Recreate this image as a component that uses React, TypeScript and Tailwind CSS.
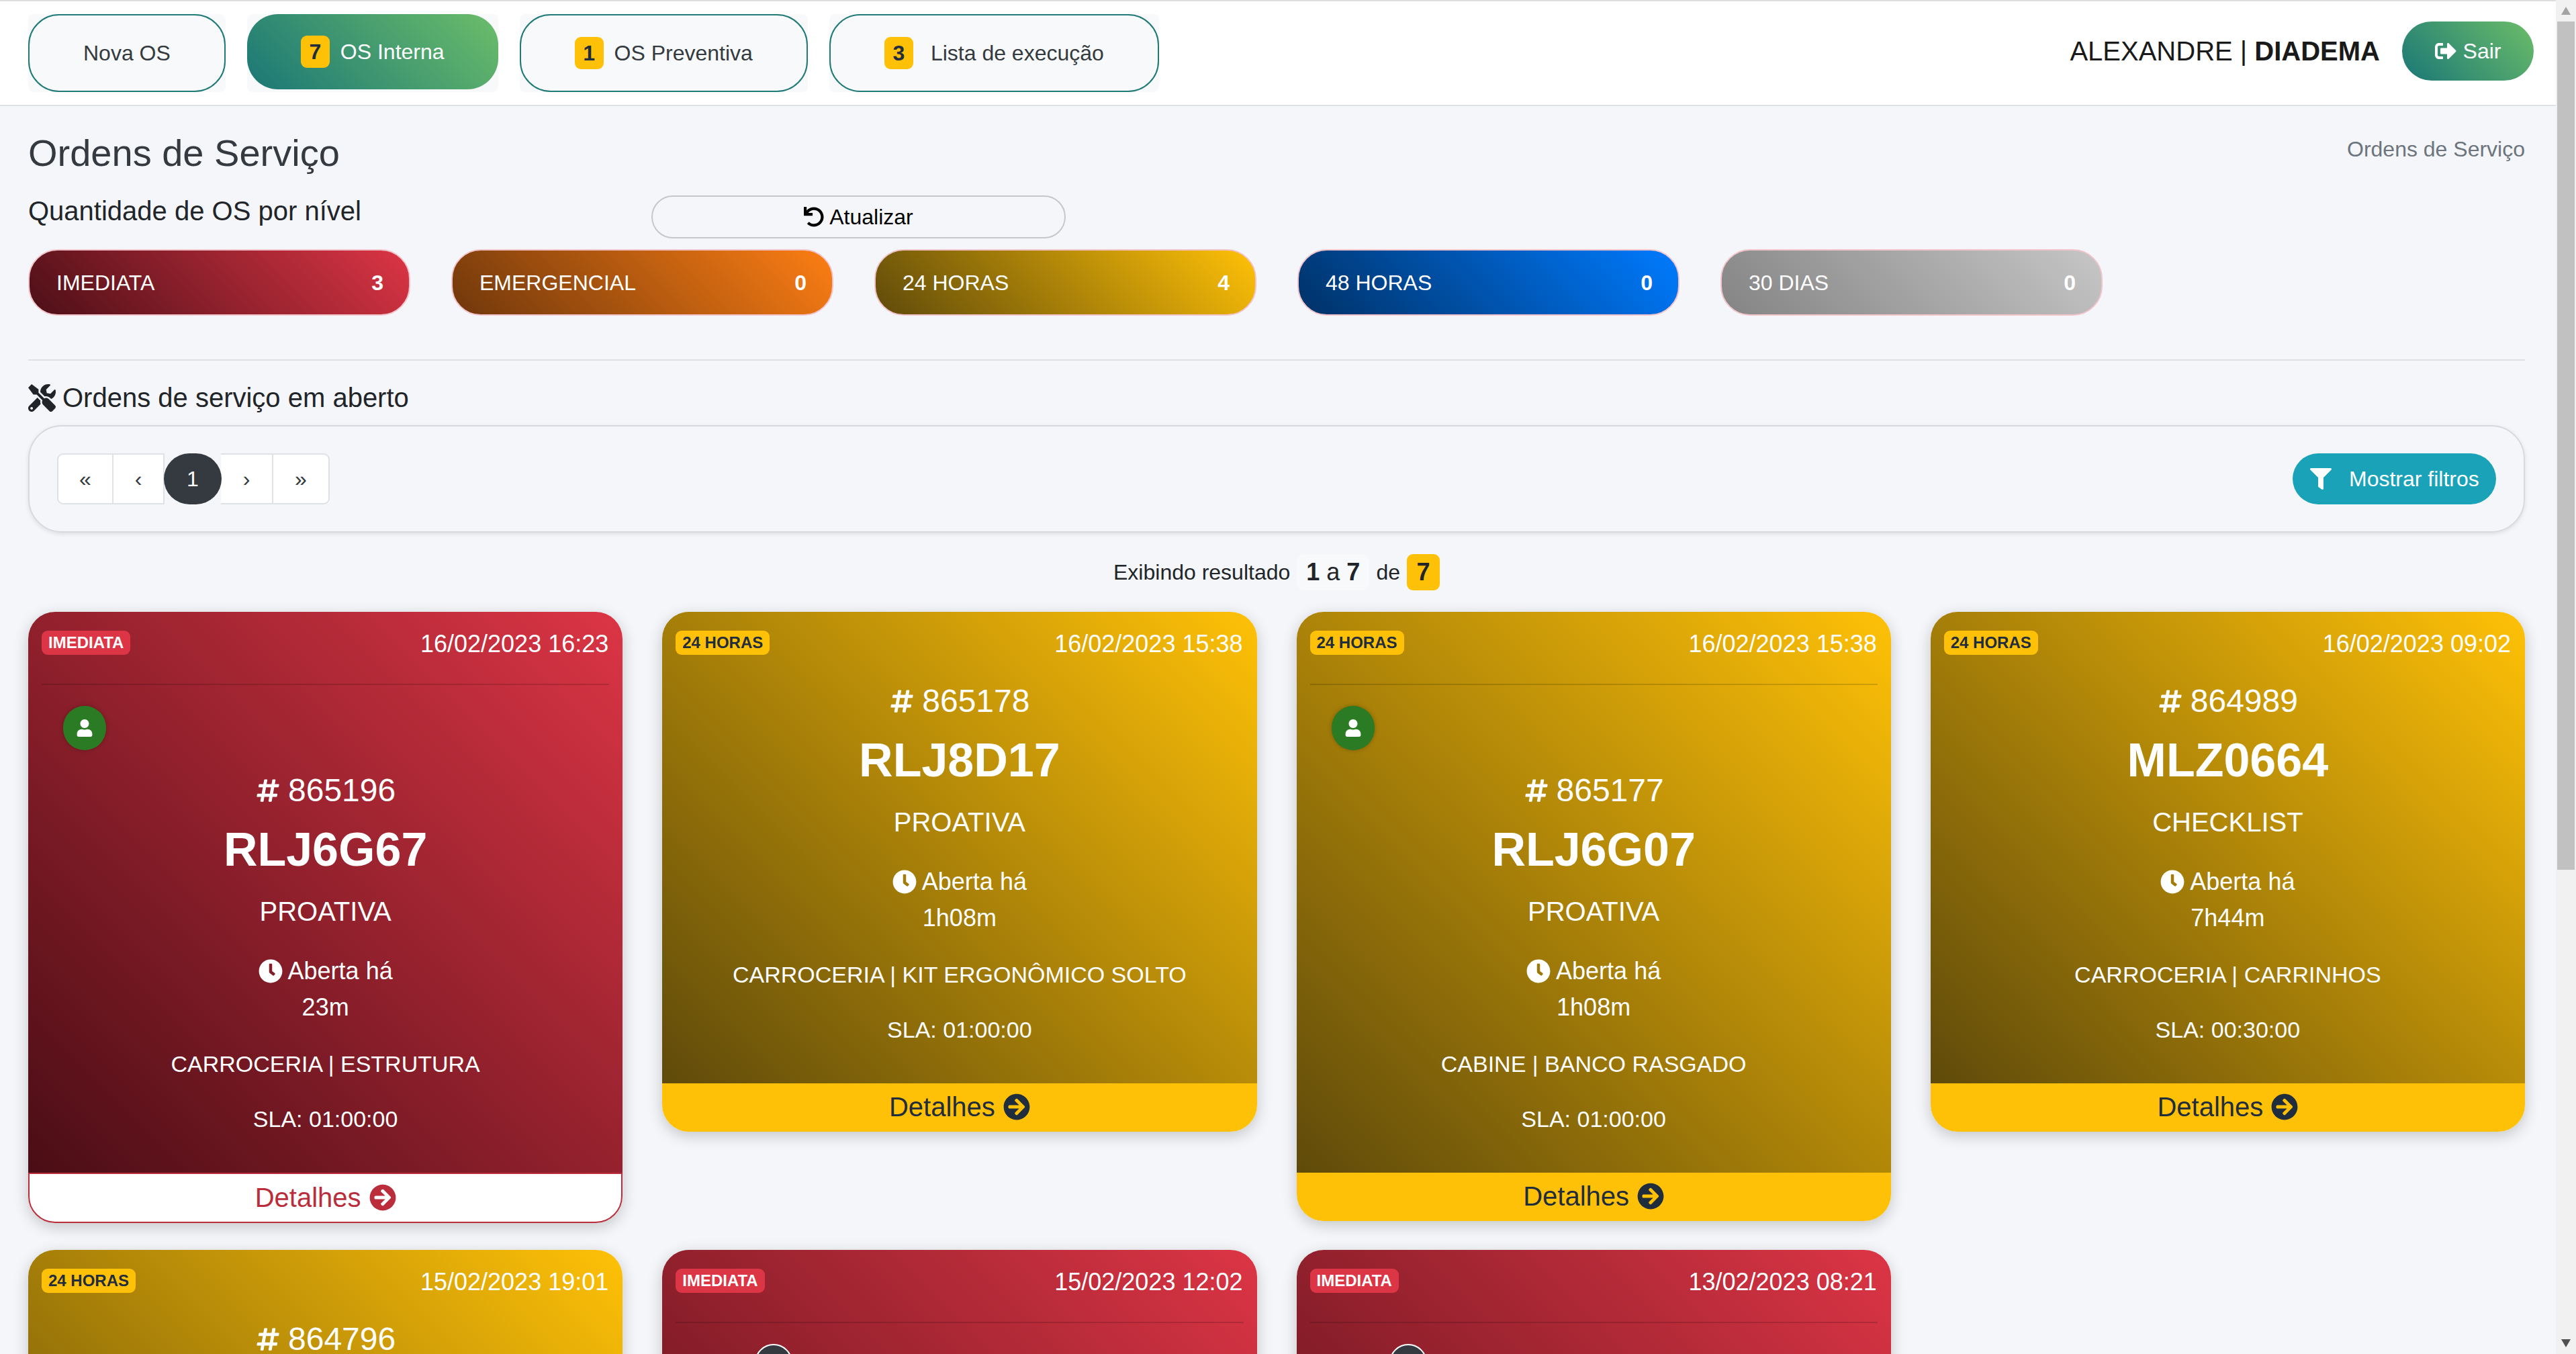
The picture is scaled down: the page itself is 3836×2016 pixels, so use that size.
import { FaArrowCircleRight, FaClock, FaFilter, FaHashtag, FaSignOutAlt, FaTools, FaUndo, FaUser } from 'react-icons/fa'

type Level = 'red' | 'yellow'

type Order = {
  level: Level
  label: string
  date: string
  id?: string
  plate?: string
  kind?: string
  open?: string
  area?: string
  sla?: string
  avatar?: 'green' | 'dark'
  outlineFooter?: boolean
}

const orders: Order[] = [
  { level: 'red', label: 'IMEDIATA', date: '16/02/2023 16:23', id: '865196', plate: 'RLJ6G67', kind: 'PROATIVA', open: '23m', area: 'CARROCERIA | ESTRUTURA', sla: '01:00:00', avatar: 'green', outlineFooter: true },
  { level: 'yellow', label: '24 HORAS', date: '16/02/2023 15:38', id: '865178', plate: 'RLJ8D17', kind: 'PROATIVA', open: '1h08m', area: 'CARROCERIA | KIT ERGONÔMICO SOLTO', sla: '01:00:00' },
  { level: 'yellow', label: '24 HORAS', date: '16/02/2023 15:38', id: '865177', plate: 'RLJ6G07', kind: 'PROATIVA', open: '1h08m', area: 'CABINE | BANCO RASGADO', sla: '01:00:00', avatar: 'green' },
  { level: 'yellow', label: '24 HORAS', date: '16/02/2023 09:02', id: '864989', plate: 'MLZ0664', kind: 'CHECKLIST', open: '7h44m', area: 'CARROCERIA | CARRINHOS', sla: '00:30:00' },
  { level: 'yellow', label: '24 HORAS', date: '15/02/2023 19:01', id: '864796' },
  { level: 'red', label: 'IMEDIATA', date: '15/02/2023 12:02', avatar: 'dark' },
  { level: 'red', label: 'IMEDIATA', date: '13/02/2023 08:21', avatar: 'dark' },
]

const pills = [
  { label: 'IMEDIATA', count: 3, bg: 'bg-[linear-gradient(45deg,#4c0f17,#dc3545)]' },
  { label: 'EMERGENCIAL', count: 0, bg: 'bg-[linear-gradient(45deg,#6f370b,#fd7e14)]' },
  { label: '24 HORAS', count: 4, bg: 'bg-[linear-gradient(45deg,#5f4a0a,#ffc107)]' },
  { label: '48 HORAS', count: 0, bg: 'bg-[linear-gradient(45deg,#003166,#007bff)]' },
  { label: '30 DIAS', count: 0, bg: 'bg-[linear-gradient(45deg,#848484,#c6c6c6)]' },
]

function NavTab({ label, count, active, gap = 'gap-[16px]' }: { label: string; count?: number; active?: boolean; gap?: string }) {
  if (active) {
    return (
      <div className="h-[116px] rounded-[8px] bg-[#f8f9fa]">
        <div className="flex h-[112px] items-center justify-center gap-[16px] rounded-[46px] bg-[linear-gradient(45deg,#1a7776,#6cbd69)] px-[80px] text-white">
          <span className="flex h-[48px] w-[43px] items-center justify-center rounded-[9px] bg-[#ffc107] font-bold text-[#1f2d3d]">{count}</span>
          <span>{label}</span>
        </div>
      </div>
    )
  }
  return (
    <div className="h-[116px] rounded-[8px] bg-[#f8f9fa]">
      <div className={`flex h-full items-center justify-center rounded-[46px] border-2 border-[#1f7a78] px-[80px] text-[#343a40] ${gap}`}>
        {count !== undefined && (
          <span className="flex h-[48px] w-[43px] items-center justify-center rounded-[9px] bg-[#ffc107] font-bold text-[#1f2d3d]">{count}</span>
        )}
        <span>{label}</span>
      </div>
    </div>
  )
}

function Navbar() {
  return (
    <header className="flex h-[156px] items-start justify-between border-b-2 border-[#dee2e6] bg-white pt-[19px] pl-[42px] pr-[33px]">
      <nav className="flex gap-[32px] text-[32px]">
        <NavTab label="Nova OS" />
        <NavTab label="OS Interna" count={7} active />
        <NavTab label="OS Preventiva" count={1} />
        <NavTab label="Lista de execução" count={3} gap="gap-[26px]" />
      </nav>
      <div className="flex items-center gap-[33px] pt-[11px]">
        <span className="text-[40px] text-[#1a1a1a]">
          ALEXANDRE | <b>DIADEMA</b>
        </span>
        <button className="flex h-[88px] w-[196px] items-center justify-center gap-[10px] rounded-[44px] bg-[linear-gradient(45deg,#1a7776,#6cbd69)] text-[32px] text-white">
          <FaSignOutAlt className="text-[32px]" />
          Sair
        </button>
      </div>
    </header>
  )
}

function Pill({ label, count, bg }: { label: string; count: number; bg: string }) {
  return (
    <div className={`flex h-[99px] items-center justify-between rounded-[44px] border-2 border-[#f1c4cb] pl-[40px] pr-[38px] text-[32px] text-white ${bg}`}>
      <span>{label}</span>
      <b>{count}</b>
    </div>
  )
}

function Pagination() {
  const cell = 'flex h-[76px] items-center justify-center border-y-2 border-r-2 border-[#dee2e6] bg-white text-[32px] text-[#343a40]'
  return (
    <div className="flex">
      <div className={`${cell} w-[84px] rounded-l-[9px] border-l-2`}>«</div>
      <div className={`${cell} w-[76px]`}>‹</div>
      <div className="z-10 -mx-[1px] flex h-[76px] w-[86px] items-center justify-center rounded-full bg-[#343a40] text-[32px] text-white">1</div>
      <div className={`${cell} w-[78px]`}>›</div>
      <div className={`${cell} w-[84px] rounded-r-[9px]`}>»</div>
    </div>
  )
}

function Card({ order }: { order: Order }) {
  const red = order.level === 'red'
  const full = Boolean(order.plate)
  return (
    <div className="rounded-[40px] shadow-[0_6px_22px_rgba(0,0,0,0.2)]">
      <div
        className={`rounded-t-[40px] text-white ${full ? 'pb-[55px]' : order.avatar ? 'min-h-[835px]' : 'min-h-[702px]'} ${
          red ? 'bg-[linear-gradient(45deg,#4a0d15,#dc3545)]' : 'bg-[linear-gradient(45deg,#5f4a0a,#ffc107)]'
        }`}
      >
        <div className="flex h-[105px] items-start justify-between pl-[20px] pr-[21px] pt-[28px]">
          <span className={`flex h-[36px] items-center rounded-[9px] px-[10px] text-[24px] font-bold ${red ? 'bg-[#dc3545] text-white' : 'bg-[#ffc107] text-[#1f2d3d]'}`}>
            {order.label}
          </span>
          <span className="-mt-[2px] text-[36px] leading-[44px]">{order.date}</span>
        </div>
        {order.avatar && (
          <>
            <div className="mx-[20px] mt-[2px] h-[2px] bg-black/15" />
            <div className={`mt-[31px] mb-[32px] flex ${order.avatar === 'green' ? 'pl-[52px]' : 'pl-[138px]'}`}>
              {order.avatar === 'green' ? (
                <span className="flex h-[66px] w-[64px] items-center justify-center rounded-full bg-[#2a7b23] shadow-[0_0_6px_rgba(0,0,0,0.25)]">
                  <FaUser className="text-[26px] text-white" />
                </span>
              ) : (
                <span className="flex h-[66px] w-[56px] items-center justify-center rounded-full border-2 border-white bg-[#343a40]" />
              )}
            </div>
          </>
        )}
        {order.id && (
          <div className="flex h-[56px] items-center justify-center gap-[11px] text-[48px]">
            <FaHashtag className="text-[38px]" />
            <span>{order.id}</span>
          </div>
        )}
        {order.plate && (
          <div className="text-center">
            <div className="mt-[18px] text-[70px] leading-[84px] font-bold">{order.plate}</div>
            <div className="mt-[23px] text-[40px] leading-[54px]">{order.kind}</div>
            <div className="mt-[35px] flex items-center justify-center gap-[8px] text-[36px] leading-[54px]">
              <FaClock className="text-[36px]" />
              Aberta há
            </div>
            <div className="text-[36px] leading-[54px]">{order.open}</div>
            <div className="mt-[32px] text-[34px] leading-[50px]">{order.area}</div>
            <div className="mt-[32px] text-[34px] leading-[50px]">SLA: {order.sla}</div>
          </div>
        )}
      </div>
      {order.plate && (
        <div
          className={`flex items-center justify-center gap-[12px] rounded-b-[40px] pb-[2px] text-[40px] ${
            order.outlineFooter ? 'h-[75px] border-2 border-[#bb2d3b] bg-white text-[#bb2d3b]' : 'h-[72px] bg-[#ffc107] text-[#1f2d3d]'
          }`}
        >
          Detalhes
          <FaArrowCircleRight className="text-[40px]" />
        </div>
      )}
    </div>
  )
}

export default function App() {
  return (
    <div className="flex h-[2016px] overflow-hidden bg-[#f4f6f9] font-['Liberation_Sans',Arial,sans-serif]">
      <div className="h-full w-[3806px] shrink-0 overflow-hidden">
        <div className="h-[2px] bg-[#dddddd]" />
        <Navbar />

        <main className="pl-[42px] pr-[46px]">
          <div className="flex items-start justify-between pt-[36px]">
            <h1 className="text-[56px] leading-[67px] text-[#343a40]">Ordens de Serviço</h1>
            <span className="pt-[4px] text-[32px] leading-[48px] text-[#6c757d]">Ordens de Serviço</span>
          </div>

          <div className="mt-[30px] flex items-start">
            <h2 className="-mt-[1px] w-[928px] text-[40px] leading-[48px] text-[#212529]">Quantidade de OS por nível</h2>
            <button className="flex h-[64px] w-[617px] items-center justify-center gap-[8px] rounded-[32px] border-2 border-[#c6c7c9] text-[32px] text-black">
              <FaUndo className="text-[30px]" />
              Atualizar
            </button>
          </div>

          <div className="mt-[16px] grid grid-cols-[repeat(5,569px)] gap-x-[61px]">
            {pills.map((p) => (
              <Pill key={p.label} {...p} />
            ))}
          </div>

          <hr className="mt-[65px] border-t-2 border-[#dfe1e6]" />

          <h3 className="mt-[31px] flex h-[48px] items-center gap-[10px] text-[40px] text-[#212529]">
            <FaTools className="text-[41px]" />
            Ordens de serviço em aberto
          </h3>

          <section className="mt-[17px] flex h-[160px] items-center justify-between rounded-[50px] border-2 border-[#d8d9de] px-[41px] shadow-[0_2px_6px_rgba(0,0,0,0.1)]">
            <Pagination />
            <button className="flex h-[76px] w-[303px] items-center gap-[26px] rounded-[38px] bg-[#1aa3b8] pl-[26px] text-[32px] text-white">
              <FaFilter className="text-[32px]" />
              Mostrar filtros
            </button>
          </section>

          <div className="mt-[31px] flex h-[56px] items-center justify-center text-[32px] text-[#212529]">
            <span>Exibindo resultado</span>
            <span className="ml-[10px] flex h-[54px] items-center gap-[10px] rounded-[12px] bg-[#f8f9fa] px-[14px] text-[36px]">
              <b>1</b> a <b>7</b>
            </span>
            <span className="ml-[10px]">de</span>
            <span className="ml-[10px] flex h-[54px] w-[49px] items-center justify-center rounded-[9px] bg-[#ffc107] text-[36px] font-bold">7</span>
          </div>

          <div className="mt-[31px] grid grid-cols-4 items-start gap-x-[59px] gap-y-[40px]">
            {orders.map((o) => (
              <Card key={o.date + o.label} order={o} />
            ))}
          </div>
        </main>
      </div>

      {/* barra de rolagem */}
      <div className="flex h-full w-[30px] shrink-0 flex-col items-center bg-[#f1f1f1] px-[2px]">
        <div className="flex h-[32px] w-full items-center justify-center text-[#a3a3a3]">
          <svg width="14" height="12" viewBox="0 0 14 12"><path d="M7 0 14 12H0z" fill="currentColor" /></svg>
        </div>
        <div className="h-[1263px] w-full bg-[#c1c1c1]" />
        <div className="flex-1" />
        <div className="flex h-[32px] w-full items-center justify-center text-[#505050]">
          <svg width="14" height="12" viewBox="0 0 14 12"><path d="M0 0h14L7 12z" fill="currentColor" /></svg>
        </div>
      </div>
    </div>
  )
}
